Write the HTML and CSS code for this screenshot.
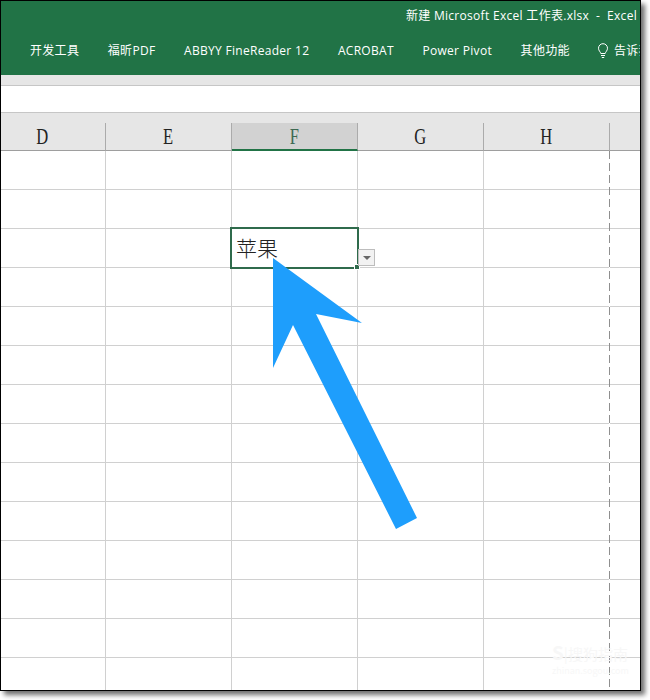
FILE: index.html
```html
<!DOCTYPE html>
<html lang="zh-CN">
<head>
<meta charset="utf-8">
<title>新建 Microsoft Excel 工作表.xlsx - Excel</title>
<link rel="stylesheet" href="styles.css">
</head>
<body>
<div class="window">
  <header class="ribbon">
    <div class="title">新建 Microsoft Excel 工作表.xlsx&nbsp; - &nbsp;Excel</div>
    <nav class="tabs">
      <span>开发工具</span>
      <span>福昕PDF</span>
      <span>ABBYY FineReader 12</span>
      <span>ACROBAT</span>
      <span>Power Pivot</span>
      <span>其他功能</span>
      <span class="tell">
        <svg class="bulb" width="12" height="16" viewBox="0 0 12 16" fill="none" stroke="#fff" stroke-width="1">
          <path d="M3.8 10.500C3.500 8.800 1.500 7.800 1.500 5.200a4.500 4.500 0 0 1 9 0c0 2.600-2 3.600-2.300 5.300z"/>
          <path d="M4 12.500h4M4.800 14.500h2.400"/>
        </svg>
        <span>告诉我</span>
      </span>
    </nav>
  </header>
  <div class="strip"></div>
  <div class="formula"></div>
  <div class="headers">
    <div class="head head-first"><span class="letter">D</span></div>
    <div class="head"><span class="letter">E</span></div>
    <div class="head head-active"><span class="letter">F</span></div>
    <div class="head"><span class="letter">G</span></div>
    <div class="head"><span class="letter">H</span></div>
    <div class="head-rest"></div>
  </div>
  <div class="sheet">
    <div class="col col-first"></div>
    <div class="col"></div>
    <div class="col"></div>
    <div class="col"></div>
    <div class="col col-break"></div>

    <div class="active-cell">苹果<i class="handle"></i></div>
    <div class="dropdown"><i class="caret"></i></div>
    <div class="watermark"><b>S</b>|搜狗指南<small>zhinan.sogou.com</small></div>
    <svg class="arrow" width="160" height="280" viewBox="0 0 160 280">
      <polygon class="arrow-shape" points="12,7 101,72 55,63 156,267 135,278 32,74 12,117"/>
    </svg>
  </div>
</div>
</body>
</html>
```
FILE: styles.css
```css
* { box-sizing: border-box; }
html, body { margin: 0; padding: 0; background: #fff; }
body { width: 650px; height: 700px; overflow: hidden; }

.window {
  width: 641px;
  height: 691px;
  border: 1px solid #000;
  display: flex;
  flex-direction: column;
  overflow: hidden;
  box-shadow: 4px 4px 5px #6f6f6f;
  background: #fff;
}

.ribbon {
  height: 74px;
  flex: none;
  background: #217346;
  color: #fff;
  font-family: "Open Sans", "Noto Sans CJK SC", sans-serif;
  font-size: 12px;
  letter-spacing: 0.3px;
  display: flex;
  flex-direction: column;
  overflow: hidden;
}
.title {
  height: 30px;
  line-height: 29px;
  text-align: right;
  padding-right: 3px;
  white-space: nowrap;
}
.tabs {
  display: flex;
  gap: 28.6px;
  padding-left: 29px;
  margin-top: 4px;
  line-height: 32px;
  height: 32px;
  white-space: nowrap;
}
.tell { display: flex; align-items: center; gap: 5px; margin-left: -1.500px; }

.strip {
  height: 11px;
  flex: none;
  background: #e6e6e6;
  border-bottom: 1px solid #c6c6c6;
}
.formula {
  height: 27px;
  flex: none;
  background: #fff;
  border-bottom: 1px solid #c6c6c6;
}

.headers {
  height: 38px;
  flex: none;
  display: flex;
  padding-top: 10px;
  background: #e6e6e6;
  font-family: "Liberation Serif", serif;
  font-size: 23px;
  color: #222;
}
.head {
  width: 126px;
  height: 28px;
  line-height: 27px;
  text-align: center;
  border-right: 1px solid #ababab;
  border-bottom: 1px solid #9e9e9e;
}
.letter { display: inline-block; transform: scaleX(0.72); }
.head-first { width: 105px; padding-right: 21px; }
.head-active {
  background: #d2d2d2;
  color: #3d6a52;
  border-bottom: 2px solid #217346;
}
.head-rest { flex: 1; border-bottom: 1px solid #9e9e9e; }

.sheet {
  position: relative;
  flex: 1;
  display: flex;
  background: repeating-linear-gradient(to bottom, #fff 0, #fff 38px, #d0d0d0 38px, #d0d0d0 39px);
}
.col { width: 126px; border-right: 1px solid #d0d0d0; }
.col-first { width: 105px; }
.col-break {
  border-right: 0;
  background: repeating-linear-gradient(to bottom, #8f8f8f 0, #8f8f8f 8px, #fff 8px, #fff 12px) right top / 1px 100% no-repeat;
}

.active-cell {
  position: absolute;
  left: 229px;
  top: 76px;
  width: 129px;
  height: 42px;
  border: 2px solid #2f6b4c;
  padding-left: 4px;
  background: #fff;
  font-family: "Noto Sans CJK SC", sans-serif;
  font-weight: 300;
  font-size: 21px;
  line-height: 37px;
  color: #222;
}
.handle {
  position: absolute;
  right: -3px;
  bottom: -3px;
  width: 6px;
  height: 6px;
  background: #2f6b4c;
  border: 1px solid #fff;
}
.dropdown {
  position: absolute;
  left: 357px;
  top: 98px;
  width: 17px;
  height: 17px;
  background: #f2f2f2;
  border: 1px solid #bdbdbd;
  display: flex;
  align-items: center;
  justify-content: center;
}
.caret {
  width: 0;
  height: 0;
  border-left: 4px solid transparent;
  border-right: 4px solid transparent;
  border-top: 4px solid #666;
}
.watermark {
  position: absolute;
  left: 551px;
  top: 491px;
  font-family: "Noto Sans CJK SC", sans-serif;
  font-size: 15px;
  line-height: 20px;
  color: #f7f7f7;
  white-space: nowrap;
}
.watermark b { font-size: 19px; }
.watermark small { display: block; font-size: 9px; line-height: 14px; }

.arrow {
  position: absolute;
  left: 260px;
  top: 100px;
}
.arrow-shape { fill: #1e9efc; }
```
